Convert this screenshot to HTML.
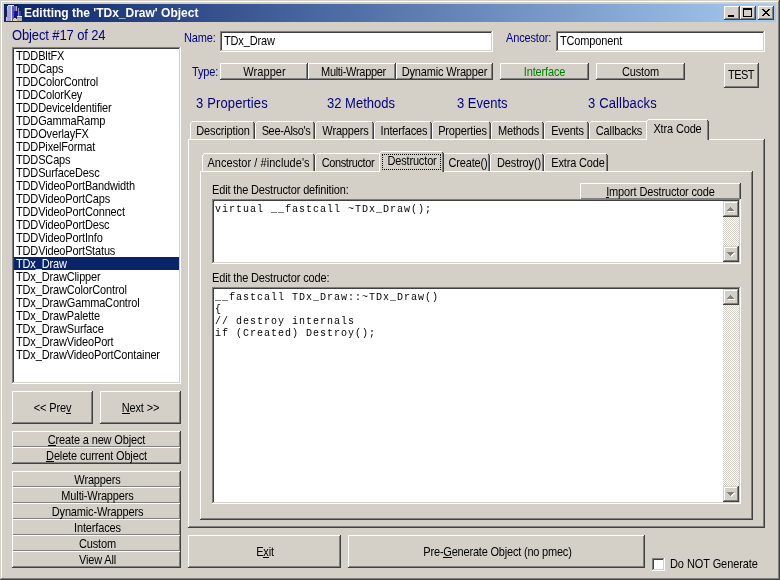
<!DOCTYPE html>
<html><head><meta charset="utf-8"><title>Editting the 'TDx_Draw' Object</title>
<style>
*{box-sizing:border-box}
html,body{margin:0;padding:0}
body{width:780px;height:580px;overflow:hidden;position:relative;background:#d4d0c8;font-family:"Liberation Sans",sans-serif;font-size:11px;color:#000;letter-spacing:-0.15px}
div,span{position:absolute}
u{position:relative;text-decoration:none}
u::after{content:"";position:absolute;left:0;width:100%;top:10px;height:1px;background:currentColor;transform-origin:0 0;transform:translateY(0.526px) scaleY(0.877)}
.root{left:0;top:0;width:780px;height:580px;will-change:transform}
.frame{left:0;top:0;width:780px;height:580px;box-shadow:inset -1px -1px 0 #404040,inset 1px 1px 0 #d4d0c8,inset -2px -2px 0 #808080,inset 2px 2px 0 #fff}
.title{left:4px;top:4px;width:772px;height:18px;background:linear-gradient(90deg,#0a246a 0%,#a6caf0 100%)}
.title b{position:absolute;left:20px;top:2px;font-size:12px;line-height:14px;color:#fff;letter-spacing:0;white-space:nowrap}
.btn{background:#d4d0c8;box-shadow:inset -1px -1px 0 #404040,inset 1px 1px 0 #fff,inset -2px -2px 0 #808080}
.sbtn{background:#d4d0c8;box-shadow:inset -1px -1px 0 #404040,inset 1px 1px 0 #d4d0c8,inset -2px -2px 0 #808080,inset 2px 2px 0 #fff}
.sunk{background:#fff;box-shadow:inset -1px -1px 0 #fff,inset 1px 1px 0 #808080,inset -2px -2px 0 #d4d0c8,inset 2px 2px 0 #404040}
.panel{background:#d4d0c8;box-shadow:inset -1px -1px 0 #404040,inset 1px 1px 0 #fff,inset -2px -2px 0 #808080}
.t{white-space:nowrap;line-height:13px;height:13px;transform:scaleY(1.14);transform-origin:0 0;text-align:center}
.l{text-align:left}
em{font-style:normal;position:relative;top:-0.9px}
.nv{color:#000080}
.big{font-size:13px;letter-spacing:0;color:#000080;white-space:nowrap;line-height:16px;transform:scaleY(1.06);transform-origin:0 0}
.tab{background:#d4d0c8}
.tab i{position:absolute;display:block}
.code{font-family:"Liberation Mono",monospace;font-size:10px;letter-spacing:1px;line-height:12px;white-space:pre;color:#000}
.track{background:conic-gradient(#fff 25%,#d4d0c8 0 50%,#fff 0 75%,#d4d0c8 0) 0 0/2px 2px}
</style></head>
<body>
<div class="root">
<div class="frame"></div>
<div class="title">
<svg style="position:absolute;left:2px;top:1px" width="16" height="16" viewBox="0 0 16 16" shape-rendering="crispEdges"><rect x="0" y="5" width="1" height="7" fill="#20203c"/><rect x="0" y="12" width="1" height="4" fill="#c4c4dc"/><rect x="1" y="1" width="4" height="15" fill="#a0a0f0"/><rect x="1" y="1" width="1" height="4" fill="#c8c8f4"/><rect x="2" y="0" width="6" height="1" fill="#e4e4fa"/><rect x="5" y="0" width="1" height="16" fill="#f2f2ff"/><rect x="6" y="1" width="5" height="15" fill="#5c5cc4"/><rect x="8" y="0" width="3" height="1" fill="#080818"/><rect x="10" y="1" width="1" height="5" fill="#b0b0c4"/><rect x="8" y="6" width="7" height="8" fill="#1414a0"/><rect x="7" y="3" width="1" height="1" fill="#4848b0"/><rect x="7" y="5" width="1" height="1" fill="#4848b0"/><rect x="7" y="7" width="1" height="1" fill="#4848b0"/><rect x="7" y="9" width="1" height="1" fill="#4848b0"/><rect x="12" y="3" width="1" height="9" fill="#9494a8"/><rect x="13" y="6" width="2" height="6" fill="#3838c0"/><rect x="15" y="10" width="1" height="1" fill="#202020"/><rect x="8" y="13" width="2" height="1" fill="#e0d848"/><rect x="7" y="14" width="5" height="2" fill="#ece444"/><rect x="11" y="11" width="5" height="1" fill="#ececec"/><rect x="11" y="12" width="5" height="1" fill="#8c8c8c"/><rect x="11" y="13" width="5" height="3" fill="#b4b4b4"/></svg>
<b>Editting the 'TDx_Draw' Object</b>
<div class="btn" style="left:720px;top:2px;width:16px;height:14px"><div style="left:4px;top:9px;width:6px;height:2px;background:#000"></div></div>
<div class="btn" style="left:736px;top:2px;width:16px;height:14px"><div style="left:3px;top:2px;width:9px;height:9px;border:1px solid #000;border-top-width:2px"></div></div>
<div class="btn" style="left:754px;top:2px;width:16px;height:14px"><svg style="position:absolute;left:4px;top:3px" width="8" height="7" viewBox="0 0 8 7" shape-rendering="crispEdges"><path d="M0 0h2v1h-2zM6 0h2v1h-2zM1 1h2v1h-2zM5 1h2v1h-2zM2 2h4v1h-4zM3 3h2v1h-2zM2 4h4v1h-4zM1 5h2v1h-2zM5 5h2v1h-2zM0 6h2v1h-2zM6 6h2v1h-2z" fill="#000"/></svg></div>
</div>
<div class="big" style="left:12px;top:27px;letter-spacing:-0.12px">Object #17 of 24</div>
<div class="sunk" style="left:12px;top:47px;width:169px;height:337px"></div>
<div style="left:14px;top:257px;width:165px;height:13px;background:#0a246a"></div>
<div class="t l" style="left:16px;top:49px;width:160px;">TDDBltFX</div>
<div class="t l" style="left:16px;top:62px;width:160px;">TDDCaps</div>
<div class="t l" style="left:16px;top:75px;width:160px;">TDDColorControl</div>
<div class="t l" style="left:16px;top:88px;width:160px;">TDDColorKey</div>
<div class="t l" style="left:16px;top:101px;width:160px;">TDDDeviceIdentifier</div>
<div class="t l" style="left:16px;top:114px;width:160px;">TDDGammaRamp</div>
<div class="t l" style="left:16px;top:127px;width:160px;">TDDOverlayFX</div>
<div class="t l" style="left:16px;top:140px;width:160px;">TDDPixelFormat</div>
<div class="t l" style="left:16px;top:153px;width:160px;">TDDSCaps</div>
<div class="t l" style="left:16px;top:166px;width:160px;">TDDSurfaceDesc</div>
<div class="t l" style="left:16px;top:179px;width:160px;">TDDVideoPortBandwidth</div>
<div class="t l" style="left:16px;top:192px;width:160px;">TDDVideoPortCaps</div>
<div class="t l" style="left:16px;top:205px;width:160px;">TDDVideoPortConnect</div>
<div class="t l" style="left:16px;top:218px;width:160px;">TDDVideoPortDesc</div>
<div class="t l" style="left:16px;top:231px;width:160px;">TDDVideoPortInfo</div>
<div class="t l" style="left:16px;top:244px;width:160px;">TDDVideoPortStatus</div>
<div class="t l" style="left:16px;top:257px;width:160px;color:#fff">TDx<em>_</em>Draw</div>
<div class="t l" style="left:16px;top:270px;width:160px;">TDx<em>_</em>DrawClipper</div>
<div class="t l" style="left:16px;top:283px;width:160px;">TDx<em>_</em>DrawColorControl</div>
<div class="t l" style="left:16px;top:296px;width:160px;">TDx<em>_</em>DrawGammaControl</div>
<div class="t l" style="left:16px;top:309px;width:160px;">TDx<em>_</em>DrawPalette</div>
<div class="t l" style="left:16px;top:322px;width:160px;">TDx<em>_</em>DrawSurface</div>
<div class="t l" style="left:16px;top:335px;width:160px;">TDx<em>_</em>DrawVideoPort</div>
<div class="t l" style="left:16px;top:348px;width:160px;">TDx<em>_</em>DrawVideoPortContainer</div>
<div class="btn" style="left:12px;top:391px;width:81px;height:33px"></div>
<div class="t " style="left:12px;top:401px;width:81px;">&lt;&lt; Pre<u>v</u></div>
<div class="btn" style="left:100px;top:391px;width:81px;height:33px"></div>
<div class="t " style="left:100px;top:401px;width:81px;"><u>N</u>ext &gt;&gt;</div>
<div class="btn" style="left:12px;top:431px;width:169px;height:17px"></div>
<div class="t " style="left:12px;top:433px;width:169px;"><u>C</u>reate a new Object</div>
<div class="btn" style="left:12px;top:447px;width:169px;height:17px"></div>
<div class="t " style="left:12px;top:449px;width:169px;"><u>D</u>elete current Object</div>
<div class="btn" style="left:12px;top:471px;width:169px;height:17px"></div>
<div class="t " style="left:13px;top:473px;width:169px;">Wrappers</div>
<div class="btn" style="left:12px;top:487px;width:169px;height:17px"></div>
<div class="t " style="left:13px;top:489px;width:169px;">Multi-Wrappers</div>
<div class="btn" style="left:12px;top:503px;width:169px;height:17px"></div>
<div class="t " style="left:13px;top:505px;width:169px;">Dynamic-Wrappers</div>
<div class="btn" style="left:12px;top:519px;width:169px;height:17px"></div>
<div class="t " style="left:13px;top:521px;width:169px;">Interfaces</div>
<div class="btn" style="left:12px;top:535px;width:169px;height:17px"></div>
<div class="t " style="left:13px;top:537px;width:169px;">Custom</div>
<div class="btn" style="left:12px;top:551px;width:169px;height:17px"></div>
<div class="t " style="left:13px;top:553px;width:169px;">View All</div>
<div class="t l nv" style="left:184px;top:31px;width:40px;">Name:</div>
<div class="sunk" style="left:220px;top:31px;width:273px;height:21px"></div>
<div class="t l" style="left:224px;top:34px;width:200px;">TDx<em>_</em>Draw</div>
<div class="t l nv" style="left:506px;top:31px;width:50px;">Ancestor:</div>
<div class="sunk" style="left:556px;top:31px;width:209px;height:21px"></div>
<div class="t l" style="left:560px;top:34px;width:200px;">TComponent</div>
<div class="t l nv" style="left:192px;top:65px;width:30px;">Type:</div>
<div class="btn" style="left:220px;top:63px;width:88px;height:17px"></div>
<div class="t " style="left:220.5px;top:65px;width:88px;letter-spacing:0.1px">Wrapper</div>
<div class="btn" style="left:308px;top:63px;width:88px;height:17px"></div>
<div class="t " style="left:309.5px;top:65px;width:88px;letter-spacing:-0.3px">Multi-Wrapper</div>
<div class="btn" style="left:396px;top:63px;width:97px;height:17px"></div>
<div class="t " style="left:396px;top:65px;width:97px;">Dynamic Wrapper</div>
<div class="btn" style="left:500px;top:63px;width:89px;height:17px"></div>
<div class="t " style="left:500px;top:65px;width:89px;color:#008000">Interface</div>
<div class="btn" style="left:596px;top:63px;width:89px;height:17px"></div>
<div class="t " style="left:596px;top:65px;width:89px;">Custom</div>
<div class="btn" style="left:724px;top:63px;width:35px;height:25px"></div>
<div class="t " style="left:723.5px;top:68px;width:35px;letter-spacing:-0.5px">TEST</div>
<div class="big" style="left:196px;top:95px;letter-spacing:0.15px">3 Properties</div>
<div class="big" style="left:327px;top:95px">32 Methods</div>
<div class="big" style="left:457px;top:95px">3 Events</div>
<div class="big" style="left:588px;top:95px;letter-spacing:0.15px">3 Callbacks</div>
<div class="panel" style="left:188px;top:139px;width:577px;height:389px"></div>
<div class="tab" style="left:190px;top:121px;width:65px;height:18px"><i style="left:0;top:2px;width:1px;height:16px;background:#fff"></i><i style="left:1px;top:1px;width:1px;height:1px;background:#fff"></i><i style="left:2px;top:0;width:61px;height:1px;background:#fff"></i><i style="left:63px;top:1px;width:1px;height:1px;background:#404040"></i><i style="left:63px;top:2px;width:1px;height:16px;background:#808080"></i><i style="left:64px;top:2px;width:1px;height:16px;background:#404040"></i><i style="left:0;top:0;width:2px;height:1px;background:#d4d0c8"></i></div>
<div class="t " style="left:190.5px;top:124px;width:65px;">Description</div>
<div class="tab" style="left:255px;top:121px;width:60px;height:18px"><i style="left:0;top:2px;width:1px;height:16px;background:#fff"></i><i style="left:1px;top:1px;width:1px;height:1px;background:#fff"></i><i style="left:2px;top:0;width:56px;height:1px;background:#fff"></i><i style="left:58px;top:1px;width:1px;height:1px;background:#404040"></i><i style="left:58px;top:2px;width:1px;height:16px;background:#808080"></i><i style="left:59px;top:2px;width:1px;height:16px;background:#404040"></i><i style="left:0;top:0;width:2px;height:1px;background:#d4d0c8"></i></div>
<div class="t " style="left:256px;top:124px;width:60px;letter-spacing:-0.35px">See-Also's</div>
<div class="tab" style="left:315px;top:121px;width:59px;height:18px"><i style="left:0;top:2px;width:1px;height:16px;background:#fff"></i><i style="left:1px;top:1px;width:1px;height:1px;background:#fff"></i><i style="left:2px;top:0;width:55px;height:1px;background:#fff"></i><i style="left:57px;top:1px;width:1px;height:1px;background:#404040"></i><i style="left:57px;top:2px;width:1px;height:16px;background:#808080"></i><i style="left:58px;top:2px;width:1px;height:16px;background:#404040"></i><i style="left:0;top:0;width:2px;height:1px;background:#d4d0c8"></i></div>
<div class="t " style="left:316px;top:124px;width:59px;">Wrappers</div>
<div class="tab" style="left:374px;top:121px;width:58px;height:18px"><i style="left:0;top:2px;width:1px;height:16px;background:#fff"></i><i style="left:1px;top:1px;width:1px;height:1px;background:#fff"></i><i style="left:2px;top:0;width:54px;height:1px;background:#fff"></i><i style="left:56px;top:1px;width:1px;height:1px;background:#404040"></i><i style="left:56px;top:2px;width:1px;height:16px;background:#808080"></i><i style="left:57px;top:2px;width:1px;height:16px;background:#404040"></i><i style="left:0;top:0;width:2px;height:1px;background:#d4d0c8"></i></div>
<div class="t " style="left:375px;top:124px;width:58px;">Interfaces</div>
<div class="tab" style="left:432px;top:121px;width:59px;height:18px"><i style="left:0;top:2px;width:1px;height:16px;background:#fff"></i><i style="left:1px;top:1px;width:1px;height:1px;background:#fff"></i><i style="left:2px;top:0;width:55px;height:1px;background:#fff"></i><i style="left:57px;top:1px;width:1px;height:1px;background:#404040"></i><i style="left:57px;top:2px;width:1px;height:16px;background:#808080"></i><i style="left:58px;top:2px;width:1px;height:16px;background:#404040"></i><i style="left:0;top:0;width:2px;height:1px;background:#d4d0c8"></i></div>
<div class="t " style="left:433px;top:124px;width:59px;">Properties</div>
<div class="tab" style="left:491px;top:121px;width:53px;height:18px"><i style="left:0;top:2px;width:1px;height:16px;background:#fff"></i><i style="left:1px;top:1px;width:1px;height:1px;background:#fff"></i><i style="left:2px;top:0;width:49px;height:1px;background:#fff"></i><i style="left:51px;top:1px;width:1px;height:1px;background:#404040"></i><i style="left:51px;top:2px;width:1px;height:16px;background:#808080"></i><i style="left:52px;top:2px;width:1px;height:16px;background:#404040"></i><i style="left:0;top:0;width:2px;height:1px;background:#d4d0c8"></i></div>
<div class="t " style="left:492px;top:124px;width:53px;">Methods</div>
<div class="tab" style="left:544px;top:121px;width:45px;height:18px"><i style="left:0;top:2px;width:1px;height:16px;background:#fff"></i><i style="left:1px;top:1px;width:1px;height:1px;background:#fff"></i><i style="left:2px;top:0;width:41px;height:1px;background:#fff"></i><i style="left:43px;top:1px;width:1px;height:1px;background:#404040"></i><i style="left:43px;top:2px;width:1px;height:16px;background:#808080"></i><i style="left:44px;top:2px;width:1px;height:16px;background:#404040"></i><i style="left:0;top:0;width:2px;height:1px;background:#d4d0c8"></i></div>
<div class="t " style="left:545px;top:124px;width:45px;">Events</div>
<div class="tab" style="left:589px;top:121px;width:60px;height:18px"><i style="left:0;top:2px;width:1px;height:16px;background:#fff"></i><i style="left:1px;top:1px;width:1px;height:1px;background:#fff"></i><i style="left:2px;top:0;width:56px;height:1px;background:#fff"></i><i style="left:58px;top:1px;width:1px;height:1px;background:#404040"></i><i style="left:58px;top:2px;width:1px;height:16px;background:#808080"></i><i style="left:59px;top:2px;width:1px;height:16px;background:#404040"></i><i style="left:0;top:0;width:2px;height:1px;background:#d4d0c8"></i></div>
<div class="t " style="left:589px;top:124px;width:60px;">Callbacks</div>
<div class="tab" style="left:646px;top:119px;width:63px;height:21px"><i style="left:0;top:2px;width:1px;height:19px;background:#fff"></i><i style="left:1px;top:1px;width:1px;height:1px;background:#fff"></i><i style="left:2px;top:0;width:59px;height:1px;background:#fff"></i><i style="left:61px;top:1px;width:1px;height:1px;background:#404040"></i><i style="left:61px;top:2px;width:1px;height:19px;background:#808080"></i><i style="left:62px;top:2px;width:1px;height:19px;background:#404040"></i><i style="left:0;top:0;width:2px;height:1px;background:#d4d0c8"></i></div>
<div class="t " style="left:646px;top:122px;width:63px;">Xtra Code</div>
<div class="panel" style="left:200px;top:171px;width:553px;height:349px"></div>
<div class="tab" style="left:202px;top:153px;width:113px;height:18px"><i style="left:0;top:2px;width:1px;height:16px;background:#fff"></i><i style="left:1px;top:1px;width:1px;height:1px;background:#fff"></i><i style="left:2px;top:0;width:109px;height:1px;background:#fff"></i><i style="left:111px;top:1px;width:1px;height:1px;background:#404040"></i><i style="left:111px;top:2px;width:1px;height:16px;background:#808080"></i><i style="left:112px;top:2px;width:1px;height:16px;background:#404040"></i><i style="left:0;top:0;width:2px;height:1px;background:#d4d0c8"></i></div>
<div class="t " style="left:202px;top:156px;width:113px;letter-spacing:0.05px">Ancestor / #include's</div>
<div class="tab" style="left:315px;top:153px;width:67px;height:18px"><i style="left:0;top:2px;width:1px;height:16px;background:#fff"></i><i style="left:1px;top:1px;width:1px;height:1px;background:#fff"></i><i style="left:2px;top:0;width:63px;height:1px;background:#fff"></i><i style="left:65px;top:1px;width:1px;height:1px;background:#404040"></i><i style="left:65px;top:2px;width:1px;height:16px;background:#808080"></i><i style="left:66px;top:2px;width:1px;height:16px;background:#404040"></i><i style="left:0;top:0;width:2px;height:1px;background:#d4d0c8"></i></div>
<div class="t " style="left:314.5px;top:156px;width:67px;letter-spacing:-0.4px">Constructor</div>
<div class="tab" style="left:442px;top:153px;width:48px;height:18px"><i style="left:0;top:2px;width:1px;height:16px;background:#fff"></i><i style="left:1px;top:1px;width:1px;height:1px;background:#fff"></i><i style="left:2px;top:0;width:44px;height:1px;background:#fff"></i><i style="left:46px;top:1px;width:1px;height:1px;background:#404040"></i><i style="left:46px;top:2px;width:1px;height:16px;background:#808080"></i><i style="left:47px;top:2px;width:1px;height:16px;background:#404040"></i><i style="left:0;top:0;width:2px;height:1px;background:#d4d0c8"></i></div>
<div class="t " style="left:444px;top:156px;width:48px;">Create()</div>
<div class="tab" style="left:490px;top:153px;width:54px;height:18px"><i style="left:0;top:2px;width:1px;height:16px;background:#fff"></i><i style="left:1px;top:1px;width:1px;height:1px;background:#fff"></i><i style="left:2px;top:0;width:50px;height:1px;background:#fff"></i><i style="left:52px;top:1px;width:1px;height:1px;background:#404040"></i><i style="left:52px;top:2px;width:1px;height:16px;background:#808080"></i><i style="left:53px;top:2px;width:1px;height:16px;background:#404040"></i><i style="left:0;top:0;width:2px;height:1px;background:#d4d0c8"></i></div>
<div class="t " style="left:492px;top:156px;width:54px;">Destroy()</div>
<div class="tab" style="left:544px;top:153px;width:64px;height:18px"><i style="left:0;top:2px;width:1px;height:16px;background:#fff"></i><i style="left:1px;top:1px;width:1px;height:1px;background:#fff"></i><i style="left:2px;top:0;width:60px;height:1px;background:#fff"></i><i style="left:62px;top:1px;width:1px;height:1px;background:#404040"></i><i style="left:62px;top:2px;width:1px;height:16px;background:#808080"></i><i style="left:63px;top:2px;width:1px;height:16px;background:#404040"></i><i style="left:0;top:0;width:2px;height:1px;background:#d4d0c8"></i></div>
<div class="t " style="left:546px;top:156px;width:64px;">Extra Code</div>
<div class="tab" style="left:379px;top:151px;width:65px;height:21px"><i style="left:0;top:2px;width:1px;height:19px;background:#fff"></i><i style="left:1px;top:1px;width:1px;height:1px;background:#fff"></i><i style="left:2px;top:0;width:61px;height:1px;background:#fff"></i><i style="left:63px;top:1px;width:1px;height:1px;background:#404040"></i><i style="left:63px;top:2px;width:1px;height:19px;background:#808080"></i><i style="left:64px;top:2px;width:1px;height:19px;background:#404040"></i><i style="left:0;top:0;width:2px;height:1px;background:#d4d0c8"></i><i style="left:3px;top:3px;width:59px;height:16px;border:1px dotted #000"></i></div>
<div class="t " style="left:379.5px;top:154px;width:65px;">Destructor</div>
<div class="t l" style="left:212px;top:183px;width:200px;">Edit the Destructor definition:</div>
<div class="btn" style="left:580px;top:183px;width:161px;height:17px"></div>
<div class="t " style="left:580px;top:185px;width:161px;"><u>I</u>mport Destructor code</div>
<div class="sunk" style="left:212px;top:199px;width:529px;height:65px"></div>
<div class="code" style="left:215px;top:204px">virtual __fastcall ~TDx_Draw();</div>
<div class="t l" style="left:212px;top:271px;width:200px;">Edit the Destructor code:</div>
<div class="sunk" style="left:212px;top:287px;width:529px;height:217px"></div>
<div class="code" style="left:215px;top:292px">__fastcall TDx_Draw::~TDx_Draw()
{
// destroy internals
if (Created) Destroy();</div>
<div class="track" style="left:723px;top:201px;width:16px;height:61px"></div>
<div class="sbtn" style="left:723px;top:201px;width:16px;height:16px"><svg style="position:absolute;left:4px;top:6px" width="8" height="5" viewBox="0 0 8 5" shape-rendering="crispEdges"><rect x="4" y="1" width="1" height="1" fill="#fff"/><rect x="3" y="2" width="3" height="1" fill="#fff"/><rect x="2" y="3" width="5" height="1" fill="#fff"/><rect x="1" y="4" width="7" height="1" fill="#fff"/><rect x="3" y="0" width="1" height="1" fill="#808080"/><rect x="2" y="1" width="3" height="1" fill="#808080"/><rect x="1" y="2" width="5" height="1" fill="#808080"/><rect x="0" y="3" width="7" height="1" fill="#808080"/></svg></div>
<div class="sbtn" style="left:723px;top:246px;width:16px;height:16px"><svg style="position:absolute;left:4px;top:6px" width="8" height="5" viewBox="0 0 8 5" shape-rendering="crispEdges"><rect x="1" y="1" width="7" height="1" fill="#fff"/><rect x="2" y="2" width="5" height="1" fill="#fff"/><rect x="3" y="3" width="3" height="1" fill="#fff"/><rect x="4" y="4" width="1" height="1" fill="#fff"/><rect x="0" y="0" width="7" height="1" fill="#808080"/><rect x="1" y="1" width="5" height="1" fill="#808080"/><rect x="2" y="2" width="3" height="1" fill="#808080"/><rect x="3" y="3" width="1" height="1" fill="#808080"/></svg></div>
<div class="track" style="left:723px;top:289px;width:16px;height:213px"></div>
<div class="sbtn" style="left:723px;top:289px;width:16px;height:16px"><svg style="position:absolute;left:4px;top:6px" width="8" height="5" viewBox="0 0 8 5" shape-rendering="crispEdges"><rect x="4" y="1" width="1" height="1" fill="#fff"/><rect x="3" y="2" width="3" height="1" fill="#fff"/><rect x="2" y="3" width="5" height="1" fill="#fff"/><rect x="1" y="4" width="7" height="1" fill="#fff"/><rect x="3" y="0" width="1" height="1" fill="#808080"/><rect x="2" y="1" width="3" height="1" fill="#808080"/><rect x="1" y="2" width="5" height="1" fill="#808080"/><rect x="0" y="3" width="7" height="1" fill="#808080"/></svg></div>
<div class="sbtn" style="left:723px;top:486px;width:16px;height:16px"><svg style="position:absolute;left:4px;top:6px" width="8" height="5" viewBox="0 0 8 5" shape-rendering="crispEdges"><rect x="1" y="1" width="7" height="1" fill="#fff"/><rect x="2" y="2" width="5" height="1" fill="#fff"/><rect x="3" y="3" width="3" height="1" fill="#fff"/><rect x="4" y="4" width="1" height="1" fill="#fff"/><rect x="0" y="0" width="7" height="1" fill="#808080"/><rect x="1" y="1" width="5" height="1" fill="#808080"/><rect x="2" y="2" width="3" height="1" fill="#808080"/><rect x="3" y="3" width="1" height="1" fill="#808080"/></svg></div>
<div class="btn" style="left:188px;top:535px;width:153px;height:33px"></div>
<div class="t " style="left:188.5px;top:545px;width:153px;">E<u>x</u>it</div>
<div class="btn" style="left:348px;top:535px;width:297px;height:33px"></div>
<div class="t " style="left:349px;top:545px;width:297px;letter-spacing:-0.2px">Pre-<u>G</u>enerate Object (no pmec)</div>
<div class="sunk" style="left:652px;top:558px;width:13px;height:13px"></div>
<div class="t l" style="left:670px;top:557px;width:100px;letter-spacing:-0.08px">Do NOT Generate</div>
</div>
</body></html>
